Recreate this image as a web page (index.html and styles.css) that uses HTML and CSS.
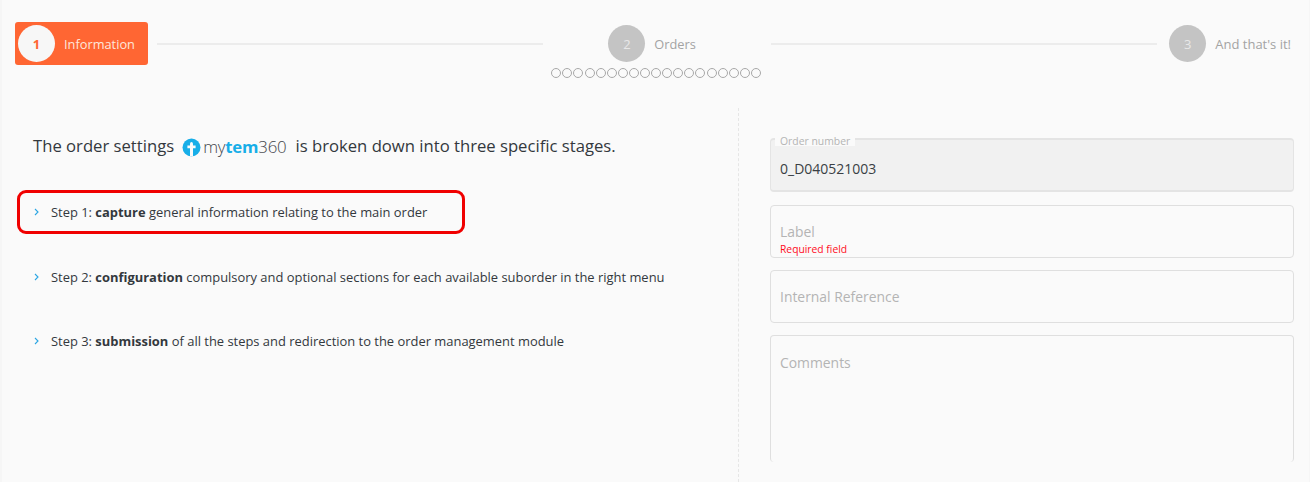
FILE: index.html
```html
<!DOCTYPE html>
<html lang="en">
<head>
<meta charset="utf-8">
<title>Order settings</title>
<link rel="stylesheet" href="styles.css">
</head>
<body>
<div class="page">
  <header class="stepper">
    <div class="step step-active">
      <span class="num">1</span>
      <span class="step-label">Information</span>
    </div>
    <div class="line"></div>
    <div class="step-mid">
      <div class="step">
        <span class="num">2</span>
        <span class="step-label">Orders</span>
      </div>
      <div class="dots">
        <i></i><i></i><i></i><i></i><i></i><i></i><i></i><i></i><i></i><i></i><i></i><i></i><i></i><i></i><i></i><i></i><i></i><i></i><i></i>
      </div>
    </div>
    <div class="line"></div>
    <div class="step step-last">
      <span class="num">3</span>
      <span class="step-label">And that's it!</span>
    </div>
  </header>
  <main class="content">
    <section class="intro">
      <h1 class="title">The order settings
        <span class="logo">
          <svg class="logo-icon" width="19" height="19" viewBox="0 0 19 19"><circle cx="9.5" cy="9.5" r="9" fill="#17aee8"/><path d="M8 18.6V10.2H5.4V7.6H8V6.4C8 4.8 8.7 4 9.5 4C10.3 4 11 4.8 11 6.4V7.6H13.6V10.2H11V18.6Z" fill="#fafafa"/></svg>
          <span class="logo-text">my<b>tem</b>360</span>
        </span>
        is broken down into three specific stages.</h1>
      <ul class="steps">
        <li class="item item-marked"><svg class="chev" width="5" height="8" viewBox="0 0 5 8"><path d="M1 1L4 4L1 7" fill="none" stroke="#2ba6e3" stroke-width="1.1"/></svg><span>Step 1: <b>capture</b> general information relating to the main order</span></li>
        <li class="item"><svg class="chev" width="5" height="8" viewBox="0 0 5 8"><path d="M1 1L4 4L1 7" fill="none" stroke="#2ba6e3" stroke-width="1.1"/></svg><span>Step 2: <b>configuration</b> compulsory and optional sections for each available suborder in the right menu</span></li>
        <li class="item"><svg class="chev" width="5" height="8" viewBox="0 0 5 8"><path d="M1 1L4 4L1 7" fill="none" stroke="#2ba6e3" stroke-width="1.1"/></svg><span>Step 3: <b>submission</b> of all the steps and redirection to the order management module</span></li>
      </ul>
    </section>
    <section class="form">
      <div class="field field-readonly">
        <span class="legend">Order number</span>
        <span class="value">0_D040521003</span>
      </div>
      <div class="field field-label">
        <span class="placeholder">Label</span>
        <span class="error">Required field</span>
      </div>
      <div class="field field-ref">
        <span class="placeholder">Internal Reference</span>
      </div>
      <div class="field field-comments">
        <span class="placeholder">Comments</span>
      </div>
    </section>
  </main>
</div>
</body>
</html>
```
FILE: styles.css
```css
* { box-sizing: border-box; }
html, body { margin: 0; height: 100%; }
body {
  font-family: "Open Sans", "Liberation Sans", sans-serif;
  color: #33383d;
  background: #f6f6f6;
  overflow: hidden;
}
.page {
  width: 1307px;
  height: 482px;
  margin-left: 2px;
  background: #fafafa;
  overflow: hidden;
}
.stepper {
  display: flex;
  align-items: flex-start;
  height: 108px;
  padding: 22px 18px 0 13px;
}
.step {
  display: flex;
  align-items: center;
  height: 43px;
  padding: 0 3px;
  gap: 9px;
  border-radius: 3px;
  font-size: 12.8px;
  color: #a3a3a3;
  white-space: nowrap;
}
.num {
  width: 37px;
  height: 37px;
  border-radius: 50%;
  background: #c4c4c4;
  color: #e8e8e8;
  font-size: 13px;
  display: flex;
  align-items: center;
  justify-content: center;
  flex: none;
}
.step-active {
  width: 133px;
  background: #ff6633;
  color: #fde6dc;
  flex: none;
}
.step-active .num {
  background: #f7f7f7;
  color: #ff6633;
  font-weight: 700;
}
.line {
  flex: 1;
  height: 2px;
  margin: 21px 9px 0;
  background: #ececec;
}
.step-mid {
  width: 210px;
  display: flex;
  flex-direction: column;
  align-items: center;
  margin: 0;
}
.step-mid .step { margin-left: -10px; }
.step-last { padding: 0 0 0 3px; margin-left: 0; font-size: 13px; }
.dots {
  display: flex;
  margin: 3px 0 0 -1px;
}
.dots i {
  flex: none;
  width: 10px;
  height: 10px;
  margin-right: 1.1px;
  border: 1px solid #a8a8a8;
  border-radius: 50%;
}
.content {
  display: grid;
  grid-template-columns: 736px 1fr;
}
.intro { padding-top: 25px; padding-left: 31px; }
.title {
  margin: 0;
  font-size: 16.67px;
  font-weight: 400;
  line-height: 26px;
  height: 26px;
  display: flex;
  align-items: center;
  gap: 5px;
  white-space: nowrap;
}
.logo {
  display: inline-flex;
  align-items: center;
  margin: 0 4px 0 3px;
}
.logo-icon { margin-top: 3px; margin-right: 2px; }
.logo-text {
  font-size: 16.8px;
  font-weight: 300;
  color: #3f4449;
  letter-spacing: -0.2px;
  margin-top: 2px;
}
.logo-text b { color: #17aee8; font-weight: 700; }
.steps {
  list-style: none;
  margin: 31px 0 0 -16px;
  padding: 0;
  display: flex;
  flex-direction: column;
  gap: 20.5px;
}
.item {
  display: flex;
  align-items: center;
  height: 44px;
  width: 448px;
  padding-left: 14px;
  font-size: 12.93px;
  white-space: nowrap;
  border: 3px solid transparent;
  border-radius: 9px;
}
.item-marked { border-color: #f00000; }
.chev {
  margin-right: 12px;
  flex: none;
}
.form {
  border-left: 1px dashed #e6e6e6;
  height: 374px;
  padding: 30px 15px 0 31px;
  display: flex;
  flex-direction: column;
  gap: 12px;
}
.field {
  position: relative;
  width: 524px;
  height: 53px;
  flex: none;
  padding: 0 9px;
  border: 1px solid #dfdfdf;
  border-radius: 4px;
  font-size: 13.9px;
  color: #b4b4b4;
}
.field-readonly {
  height: 54px;
  margin-bottom: 1px;
  background: #f1f1f1;
  border-width: 2px 1px;
  border-color: #e4e4e4;
  display: flex;
  align-items: center;
  padding-top: 6px;
}
.value { color: #3a3f44; font-size: 14px; }
.legend {
  position: absolute;
  top: -3px;
  left: 4px;
  padding: 0 5px;
  font-size: 10.4px;
  line-height: 9px;
  color: #b4b4b4;
  background: #fafafa;
}
.field-label, .field-ref { padding-top: 16px; }
.placeholder { display: block; line-height: 20px; }
.error {
  display: block;
  color: #ff0d1d;
  font-size: 10.3px;
  line-height: 13px;
  margin-top: 1px;
}
.field-comments {
  height: 127px;
  padding-top: 17px;
  border-bottom: 0;
}
```
